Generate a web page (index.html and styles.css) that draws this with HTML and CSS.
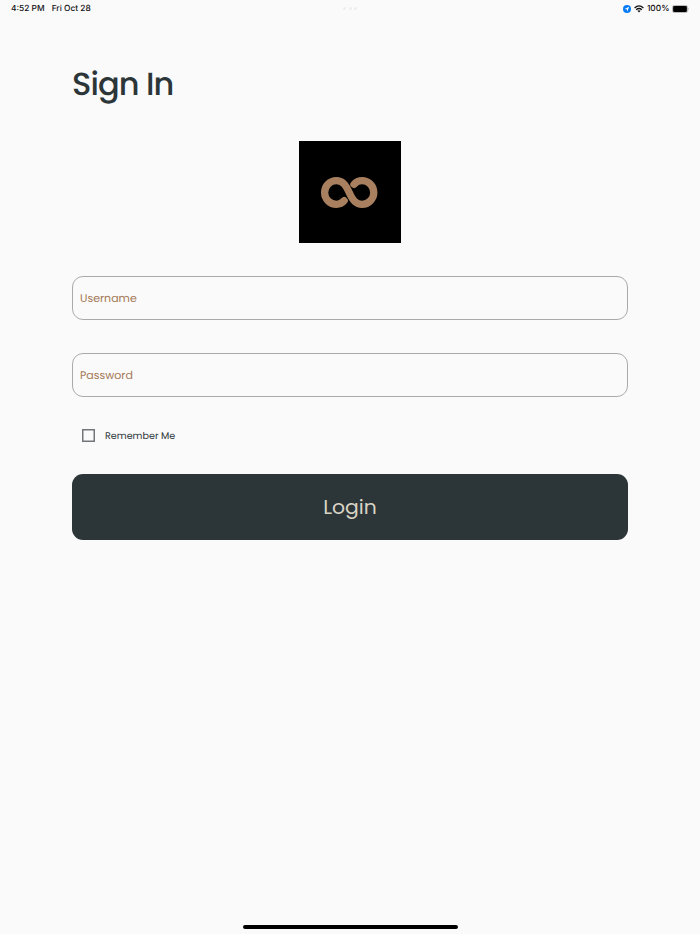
FILE: index.html
```html
<!DOCTYPE html>
<html lang="en">
<head>
<meta charset="utf-8">
<meta name="viewport" content="width=device-width">
<title>Sign In</title>
<link rel="stylesheet" href="styles.css">
</head>
<body>
<header class="status">
  <div class="status-left"><span class="time">4:52 PM</span><span class="date">Fri Oct 28</span></div>
  <div class="dots"><i></i><i></i><i></i></div>
  <div class="status-right">
    <svg class="location" viewBox="0 0 8 8"><circle cx="4" cy="4" r="4" fill="#087cf5"/><path d="M1.6 4 6.2 1.8 4.2 6.4 3.8 4.2Z" fill="#fff"/></svg>
    <svg class="wifi" viewBox="0 0 10 8"><g fill="none" stroke="#111" stroke-width="1.35"><path d="M.6 2.9Q5-1.1 9.4 2.9M2.2 4.7Q5 2.2 7.8 4.7"/></g><path d="M3.4 5.8Q5 4.6 6.6 5.8L5 7.5Z" fill="#111"/></svg>
    <span class="percent">100%</span>
    <svg class="battery" viewBox="0 0 18 8"><rect x=".4" y=".4" width="15.2" height="7.2" rx="2" fill="none" stroke="#a2a2a2" stroke-width=".8"/><rect x="1.1" y="1.1" width="13.8" height="5.8" rx="1.2"/><path d="M16.5 2.7Q17.8 4 16.5 5.3Z" fill="#999"/></svg>
  </div>
</header>
<main class="content">
  <h1>Sign In</h1>
  <svg class="logo" viewBox="0 0 102 102"><rect width="102" height="102"/><path d="M45.2 59.7C42.6 62.8 40 63.3 37.4 63.3A11.8 11.8 0 1 1 37.4 39.7C43 39.7 46.3 42.9 50.2 51.5S57.4 63.3 63 63.3A11.8 11.8 0 1 0 63 39.7C60 39.7 57.4 40.6 55 43.3" fill="none" stroke="#a9805f" stroke-width="7.3" stroke-linecap="round" stroke-linejoin="round"/></svg>
  <form class="form">
    <div class="field"><span class="username">Username</span></div>
    <div class="field"><span class="password">Password</span></div>
    <div class="remember"><i class="box"></i><span class="remember-label">Remember Me</span></div>
    <button type="button" class="login"><span class="login-label">Login</span></button>
  </form>
</main>
<div class="home"></div>
</body>
</html>
```
FILE: styles.css
```css
* { box-sizing: border-box; }
body {
  margin: 0;
  height: 934px;
  display: flex;
  flex-direction: column;
  overflow: hidden;
  background: #fafafa;
  color: #2c3538;
  font-family: Poppins, Inter, sans-serif;
  text-rendering: geometricPrecision;
}
.status {
  height: 17px;
  padding: 0 11px;
  display: grid;
  grid-template-columns: 1fr auto 1fr;
  align-items: center;
  color: #111;
  font: 500 8.4px/17px Inter, sans-serif;
}
.status-left { display: flex; gap: 7px; padding-top: 1px; }
.dots { display: flex; gap: 2.5px; margin-bottom: 1px; }
.dots i { width: 3px; height: 3px; border-radius: 50%; background: #eee; }
.status-right { display: flex; align-items: center; justify-content: flex-end; margin-right: -.5px; }
.location, .wifi, .battery { margin-bottom: 1px; }
.location { width: 8px; height: 8px; margin-right: 3px; }
.wifi { width: 10px; height: 8px; margin-right: 2.5px; }
.percent { margin-right: 2px; padding-top: 1px; }
.battery { width: 18px; height: 8px; }
.content { flex: 1; padding: 0 72px; display: flex; flex-direction: column; }
h1 {
  margin: 43px 0 0;
  height: 48px;
  font-size: 32px;
  line-height: 49px;
  font-weight: 500;
  letter-spacing: -.9px;
}
.logo { width: 102px; height: 102px; margin: 33px 0; align-self: center; }
.form { display: flex; flex-direction: column; }
.field {
  height: 44px;
  margin-bottom: 33px;
  padding: 1px 7px 0;
  display: flex;
  align-items: center;
  border: 1px solid #a9abab;
  border-radius: 11px;
  color: #a47857;
  font-size: 11px;
}
.remember { height: 14px; margin: -1.4px 0 31.4px 10px; display: flex; align-items: center; gap: 10px; }
.box { width: 13px; height: 13px; box-shadow: inset 0 0 0 1.5px #727678; }
.remember-label { font-size: 9.6px; padding-top: 3px; }
.login {
  height: 66px;
  padding: 0;
  border: 0;
  border-radius: 11px;
  background: #2c3538;
  color: #d9d3c5;
  font-family: inherit;
  font-size: 20.4px;
}
.home { width: 215px; height: 4px; margin: 0 auto 5.5px; border-radius: 2px; background: #000; }
```
